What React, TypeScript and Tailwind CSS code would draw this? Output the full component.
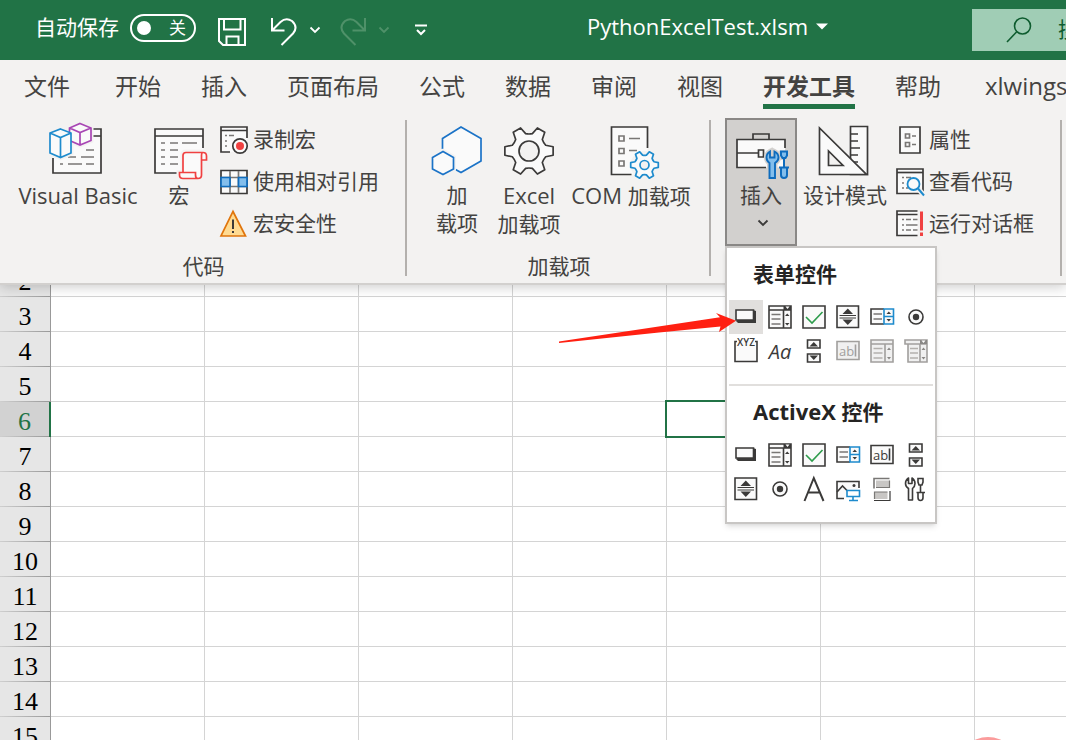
import type { ReactNode } from 'react';

const DARK = '#3b3a39';
const GREY = '#797775';
const PAPER = '#fafafa';
const BLUE = '#1e8bcd';

const tabs = ['开始', '插入', '页面布局', '公式', '数据', '审阅', '视图', '开发工具', '帮助'];
const rows = [3, 4, 5, 6, 7, 8, 9, 10, 11, 12, 13, 14, 15];
const columns = ['B', 'C', 'D', 'E', 'F', 'G', 'H', 'I', 'J', 'K', 'L', 'M'];
const activeRow = 6;
const activeColumn = 'F';

interface IconProps {
  children: ReactNode;
}

const LargeIcon = ({ children }: IconProps) => (
  <svg width="60" height="59" viewBox="0 0 60 59" fill="none" strokeWidth="1.7" className="shrink-0" aria-hidden="true">
    {children}
  </svg>
);

const SmallIcon = ({ children }: IconProps) => (
  <svg width="28" height="28" viewBox="0 0 28 28" fill="none" strokeWidth="1.7" className="shrink-0 overflow-visible" aria-hidden="true">
    {children}
  </svg>
);

const MenuIcon = ({ children }: IconProps) => (
  <svg width="24" height="24" viewBox="0 0 24 24" fill="none" strokeWidth="1.6" className="overflow-visible" aria-hidden="true">
    {children}
  </svg>
);

// Six-toothed cog around (cx, cy); r is the tip radius
const Gear = ({ cx, cy, r, hole, color }: { cx: number; cy: number; r: number; hole: number; color: string }) => {
  const at = (radius: number, deg: number) => {
    const a = (deg * Math.PI) / 180;
    return `${(cx + radius * Math.cos(a)).toFixed(2)} ${(cy + radius * Math.sin(a)).toFixed(2)}`;
  };
  const d = [0, 60, 120, 180, 240, 300]
    .map((t, i) => `${i ? 'L' : 'M'}${at(r * 0.72, t - 19)}L${at(r, t - 10)}L${at(r, t + 10)}L${at(r * 0.72, t + 19)}Q${at(r * 0.68, t + 30)} ${at(r * 0.72, t + 41)}`)
    .join('');
  return (
    <g stroke={color} strokeLinejoin="round">
      <path d={`${d}Z`} fill={PAPER} />
      <circle cx={cx} cy={cy} r={hole} fill="#f3f2f1" />
    </g>
  );
};

const VisualBasicIcon = () => (
  <LargeIcon>
    <path d="M5 7H53V51H5Z" fill={PAPER} />
    <path d="M45 7H53V51H5V36M45 14H53" stroke={DARK} />
    <path d="M38 28H46M20 35H28M33 35H46M12 42H15M20 42H34M38 42H46" stroke={GREY} />
    <path d="M32 1.5L43 6V18.5L32 23L21.5 18.5V6Z" fill={PAPER} stroke="#f3f2f1" strokeWidth="5" />
    <path d="M12.5 7L23 11V31L12.5 35.5L2 31V11Z" fill={PAPER} stroke="#f3f2f1" strokeWidth="5" />
    <path d="M32 1.5L43 6V18.5L32 23L21.5 18.5V6ZM21.5 6L32 10.5L43 6M32 10.5V23" fill={PAPER} stroke="#a846b4" />
    <path d="M12.5 7L23 11V31L12.5 35.5L2 31V11ZM2 11L12.5 15.5L23 11M12.5 15.5V35.5" fill={PAPER} stroke={BLUE} />
  </LargeIcon>
);

const MacroIcon = () => (
  <LargeIcon>
    <path d="M6 7H54V51H6Z" fill={PAPER} />
    <path d="M54 26V7H6V51H28M6 14H54" stroke={DARK} />
    <path d="M12 21H16M21 21H29M33 21H48M12 28H16M21 28H29M12 35H16M21 35H29M12 42H16M21 42H29" stroke={GREY} />
    <path d="M34 50.5V33Q34 30 37 30H58V38H52.5V53Q52.5 56.5 49 56.5H30V50.5Z" fill={PAPER} stroke="#f3f2f1" strokeWidth="5" />
    <path
      d="M34 50.5V33.5Q34 30.5 37 30.5H54Q57.5 30.5 57.5 34V38H52.5V53Q52.5 56.5 49 56.5H34Q30.5 56.5 30.5 53V50.5H46.5V53Q46.5 56.5 49 56.5M52.5 38V33.5Q52.5 30.5 54 30.5"
      fill={PAPER}
      stroke="#f04141"
    />
  </LargeIcon>
);

const AddinIcon = () => (
  <LargeIcon>
    <path d="M34 5L54 16.5V39L34 50.5L15.5 40V16.5Z" fill={PAPER} />
    <path d="M28.5 47.5L34 50.5L54 39V16.5L34 5L15.5 16.5V27" stroke="#1b73c7" />
    <path d="M16 29.5L26.5 35.5V47L16 52.5L5.5 47V35.5Z" fill={PAPER} stroke="#f3f2f1" strokeWidth="5" />
    <path d="M16 29.5L26.5 35.5V47L16 52.5L5.5 47V35.5Z" fill={PAPER} stroke="#1b73c7" />
  </LargeIcon>
);

const ExcelAddinIcon = () => (
  <LargeIcon>
    <Gear cx={30} cy={29} r={24.5} hole={10} color={DARK} />
  </LargeIcon>
);

const ComAddinIcon = () => (
  <LargeIcon>
    <path d="M10.5 5H46.5V52.5H10.5Z" fill={PAPER} />
    <path d="M46.5 26V5H10.5V52.5H30.5" stroke={DARK} />
    <path d="M18 14H23V19H18ZM18 26.5H23V31.5H18ZM18 39H23V44H18ZM28 16.5H39M28 28.5H36" stroke={GREY} />
    <circle cx="43.5" cy="43" r="14" fill="#f3f2f1" />
    <Gear cx={43.5} cy={43} r={14} hole={4.5} color={BLUE} />
  </LargeIcon>
);

const ToolboxIcon = () => (
  <LargeIcon>
    <path d="M6 17.5H54V45.5H6Z" fill={PAPER} />
    <path d="M54 26V17.5H6V45.5H35M22 17.5V12H38V17.5M6 31H27.5" stroke={DARK} />
    <path d="M27.5 28H32.5V35H27.5Z" fill={PAPER} stroke={DARK} />
    <path d="M38.5 56.5V41Q35.5 39 35.5 35.5Q35.5 31.5 39 29.5V35.5H43.5V29.5Q47.5 31.5 47.5 35.5Q47.5 39 44 41V56.5Z" fill="#83beec" stroke="#d2d0ce" strokeWidth="5" />
    <path d="M47.5 28.5H58V38H47.5Z" fill="#d2d0ce" />
    <path d="M38.5 56V41Q35.5 39 35.5 35.5Q35.5 31.5 39 29.5V35.5H43.5V29.5Q47.5 31.5 47.5 35.5Q47.5 39 44 41V56Z" fill="#83beec" stroke="#0f6cbd" strokeWidth="1.9" />
    <path d="M50 29.5H56V33.5L54.5 36H51.5L50 33.5ZM53 36V45M48 45.5H58M50 46V53Q50 56 53 56Q56 56 56 53V46" fill="#83beec" stroke="#0f6cbd" strokeWidth="2" />
  </LargeIcon>
);

const DesignIcon = () => (
  <LargeIcon>
    <path d="M35.5 4.5H52.5V52.5H35.5Z" fill={PAPER} stroke={DARK} />
    <path d="M35.5 12H43M35.5 19H43M35.5 26H45M35.5 33H43M35.5 40H43" stroke={DARK} />
    <path d="M4.5 6V52.5H51.5Z" fill={PAPER} stroke={DARK} />
    <path d="M13.5 29V43.5H28Z" fill="#f3f2f1" stroke={DARK} />
  </LargeIcon>
);

const RecordIcon = () => (
  <SmallIcon>
    <path d="M1 1H27V26H1Z" fill={PAPER} />
    <path d="M27 12V1H1V26H10M1 4.5H27" stroke={DARK} />
    <path d="M5 9.5H7M9 9.5H14M5 15H7M5 20H7" stroke={GREY} />
    <circle cx="20" cy="20" r="7.2" fill={PAPER} stroke={DARK} />
    <circle cx="20" cy="20" r="4" fill="#f04141" />
  </SmallIcon>
);

const RelativeRefIcon = () => (
  <SmallIcon>
    <path d="M1 2.5H27V25.5H1Z" fill={PAPER} stroke={DARK} />
    <path d="M10 3V25M18.5 3V25M1 9.5H27M1 18.5H27" stroke={GREY} />
    <path d="M1 9.5H10V18.5H1ZM18.5 9.5H27V18.5H18.5Z" fill="#83beec" stroke="#0f6cbd" />
  </SmallIcon>
);

const WarningIcon = () => (
  <SmallIcon>
    <path d="M13 1.5L25.5 26H1Z" fill="#ffdb92" stroke="#e0750c" />
    <path d="M13 9.5V19M13 21V23" stroke={DARK} strokeWidth="2" />
  </SmallIcon>
);

const PropertiesIcon = () => (
  <SmallIcon>
    <path d="M4 1H24V27H4Z" fill={PAPER} stroke={DARK} />
    <path d="M9.5 8H13.5V12H9.5ZM9.5 16.5H13.5V20.5H9.5ZM16 10H20M16 18.5H20" stroke={GREY} />
  </SmallIcon>
);

const ViewCodeIcon = () => (
  <SmallIcon>
    <path d="M1 1H27V25.5H1Z" fill={PAPER} stroke={DARK} />
    <path d="M1 4.5H27" stroke={DARK} />
    <path d="M6 9.5H8M10 9.5H15M6 15H8M6 20H8M10 20H12" stroke={GREY} />
    <path d="M22 20.5L28 27.5" stroke="#f3f2f1" strokeWidth="5" />
    <circle cx="17.5" cy="16" r="6" fill={PAPER} stroke={BLUE} strokeWidth="1.8" />
    <path d="M22 20.5L28 27.5" stroke={BLUE} strokeWidth="2" />
  </SmallIcon>
);

const RunDialogIcon = () => (
  <SmallIcon>
    <path d="M1 1H21.5V25.5H1Z" fill={PAPER} />
    <path d="M21.5 1H1V25.5H21.5M1 4.5H21.5" stroke={DARK} />
    <path d="M6 9.5H8M10 9.5H15M17 9.5H21.5M6 15H8M10 15H21.5M6 20H8M10 20H15M17 20H21.5" stroke={GREY} />
    <path d="M25.5 1.5V20.5M25.5 22.5V26" stroke="#f04141" strokeWidth="3" />
  </SmallIcon>
);

const ButtonControl = () => (
  <MenuIcon>
    <path d="M19 5L22 6V18H4L2 16Z" fill={DARK} />
    <path d="M2 5H19.5V15H2Z" fill={PAPER} stroke={DARK} />
  </MenuIcon>
);

const ComboListControl = () => (
  <MenuIcon>
    <path d="M1 1H23V23H1Z" fill={PAPER} stroke={DARK} />
    <path d="M15.5 1H23V5H15.5Z" fill={DARK} />
    <path d="M1 5H23M15.5 5V23" stroke={DARK} />
    <path d="M17.5 1.5H21.5L19.5 4Z" fill="#fff" />
    <path d="M3.5 9.5H12.5M3.5 14H12.5M3.5 19H12.5" stroke={GREY} />
    <path d="M17 11L19.2 8.5L21.5 11ZM17 18L19.2 20.5L21.5 18Z" fill={DARK} />
  </MenuIcon>
);

const CheckControl = () => (
  <MenuIcon>
    <path d="M1 1H23V23H1Z" fill={PAPER} stroke={DARK} />
    <path d="M4 12L10 18L20.5 7" stroke="#2e9c4c" />
  </MenuIcon>
);

const SpinControl = () => (
  <MenuIcon>
    <path d="M1 1H22.5V22.5H1Z" fill={PAPER} stroke={DARK} />
    <path d="M3.5 10.5H20M3.5 13H20" stroke={DARK} strokeWidth="1" />
    <path d="M6.5 9L11.8 3.5L17 9ZM6.5 14.5L11.8 20L17 14.5Z" fill={DARK} />
  </MenuIcon>
);

const ComboControl = () => (
  <MenuIcon>
    <path d="M14 4H1V19H14" fill={PAPER} stroke={DARK} />
    <path d="M3.5 9H12M3.5 14H12" stroke={GREY} />
    <path d="M14 4H23.5V19H14ZM14 11.5H23.5" fill={PAPER} stroke={BLUE} />
    <path d="M16.5 9L18.8 6.5L21 9ZM16.5 14L18.8 16.5L21 14Z" fill={DARK} />
  </MenuIcon>
);

const RadioControl = () => (
  <MenuIcon>
    <circle cx="12" cy="12" r="7" fill={PAPER} stroke={DARK} />
    <circle cx="12" cy="12" r="3.2" fill={DARK} />
  </MenuIcon>
);

const GroupBoxControl = () => (
  <MenuIcon>
    <path d="M3 2.5H1V22.5H23V2.5H21" fill={PAPER} stroke={DARK} />
    <text x="12" y="7" textAnchor="middle" fontSize="10" fontWeight="600" fill={DARK}>XYZ</text>
  </MenuIcon>
);

const LabelControl = () => (
  <MenuIcon>
    <text x="12" y="20" textAnchor="middle" fontSize="20" fontStyle="italic" fill={DARK}>Aa</text>
  </MenuIcon>
);

const ScrollControl = () => (
  <MenuIcon>
    <path d="M5.5 1H18V9H5.5ZM5.5 15H18V23H5.5Z" fill={PAPER} stroke={DARK} />
    <path d="M7.5 7.5L11.8 3L16 7.5ZM7.5 16.5L11.8 21L16 16.5Z" fill={DARK} />
  </MenuIcon>
);

const TextFieldControl = ({ disabled }: { disabled?: boolean }) => {
  const color = disabled ? '#a19f9d' : DARK;
  return (
    <MenuIcon>
      <path d="M1 2.5H23V20.5H1Z" fill={disabled ? '#f0f0f0' : PAPER} stroke={color} />
      <text x="3" y="17" fontSize="13" fill={color}>ab</text>
      <path d="M19.5 5.5V17.5" stroke={color} />
    </MenuIcon>
  );
};

const DisabledListControl = () => (
  <MenuIcon>
    <path d="M1 1H23V23H1ZM1 5H23M15 5V23" fill="#f0f0f0" stroke="#a19f9d" />
    <path d="M3.5 9.5H12.5M3.5 14H12.5M3.5 19H12.5" stroke="#b3b0ad" />
    <path d="M17 11L19 8.5L21 11ZM17 18L19 20.5L21 18Z" fill="#8a8886" />
  </MenuIcon>
);

const DisabledComboControl = () => (
  <MenuIcon>
    <path d="M4 5H23V23H4ZM16 5V23M1 1H23V5H1Z" fill="#f0f0f0" stroke="#a19f9d" />
    <path d="M16 1H23V5H16Z" fill="#8a8886" />
    <path d="M17.5 1.5H21.5L19.5 4Z" fill="#fff" />
    <path d="M6 9.5H14M6 14H14M6 19H14" stroke="#b3b0ad" />
    <path d="M17.5 11L19.5 8.5L21.5 11ZM17.5 18L19.5 20.5L21.5 18Z" fill="#8a8886" />
  </MenuIcon>
);

const CaptionControl = () => (
  <MenuIcon>
    <path d="M2.5 24L11.8 1L21.5 24M6 15.5H18" stroke={DARK} strokeWidth="2" />
  </MenuIcon>
);

const ImageControl = () => (
  <MenuIcon>
    <path d="M8 21.5H1V4.5H23V11" fill={PAPER} stroke={DARK} />
    <path d="M1 15L6.5 9L12 14.5" stroke={DARK} />
    <circle cx="18" cy="8.5" r="1.5" fill={DARK} />
    <path d="M11 13.5H23.5V19.5H11ZM17 19.5V23M13 23.5H22" fill="#fff" stroke={BLUE} />
  </MenuIcon>
);

const ToggleControl = () => (
  <MenuIcon>
    <path d="M6 3.5H19.5V10.5H6ZM4.5 15H17.5V22H4.5Z" fill="#c8c6c4" />
    <path d="M4 11.5V1.5H19.5" stroke={GREY} />
    <path d="M6 10.5H19.5V3.5M4.5 22V15H17.5" stroke={GREY} strokeWidth="1.2" />
    <path d="M20 14V23.5H4" stroke={DARK} strokeWidth="1.2" />
  </MenuIcon>
);

const MoreToolsControl = () => (
  <MenuIcon>
    <path d="M4.5 23V11.5Q1.5 9.5 1.5 6.5Q1.5 3 4.5 1V6.5H8V1Q11 3 11 6.5Q11 9.5 8.5 11.5V23Z" fill={PAPER} stroke={DARK} strokeLinejoin="round" />
    <path d="M14 1.5H19V5L18 8H15L14 5ZM16.5 8V15M12.5 15.5H21M14 16V20.5Q14 23.5 16.5 23.5Q19 23.5 19 20.5V16" fill={PAPER} stroke={DARK} />
  </MenuIcon>
);

const Chevron = ({ color }: { color: string }) => (
  <svg width="12" height="8" viewBox="0 0 12 8" fill="none" stroke={color} strokeWidth="1.8" aria-hidden="true">
    <path d="M1.5 1.5L6 6L10.5 1.5" />
  </svg>
);

const LargeButton = ({ icon, width, children }: { icon: ReactNode; width: string; children: ReactNode }) => (
  <button type="button" className={`flex shrink-0 flex-col items-center whitespace-nowrap pt-1 leading-7 ${width}`}>
    {icon}
    {children}
  </button>
);

const SmallButton = ({ icon, label }: { icon: ReactNode; label: string }) => (
  <button type="button" className="flex h-[42px] items-center gap-[5px] whitespace-nowrap">
    {icon}
    {label}
  </button>
);

const RibbonGroup = ({ caption, width, pad, children }: { caption?: string; width: string; pad: string; children: ReactNode }) => (
  <section className={`relative flex shrink-0 flex-col ${width}`}>
    <div className={`flex h-[133px] items-start ${pad}`}>{children}</div>
    {caption && <div className="text-center leading-[30px]">{caption}</div>}
    <div className="absolute right-0 top-0.5 h-[156px] w-0.5 bg-[#b3b0ad]" />
  </section>
);

const formControls = [
  { name: '按钮', icon: <ButtonControl />, hot: true },
  { name: '组合框', icon: <ComboListControl /> },
  { name: '复选框', icon: <CheckControl /> },
  { name: '数值调节钮', icon: <SpinControl /> },
  { name: '列表框', icon: <ComboControl /> },
  { name: '选项按钮', icon: <RadioControl /> },
  { name: '分组框', icon: <GroupBoxControl /> },
  { name: '标签', icon: <LabelControl /> },
  { name: '滚动条', icon: <ScrollControl /> },
  { name: '文本域', icon: <TextFieldControl disabled />, disabled: true },
  { name: '组合列表', icon: <DisabledListControl />, disabled: true },
  { name: '组合下拉', icon: <DisabledComboControl />, disabled: true },
];

const activeXControls = [
  { name: '命令按钮', icon: <ButtonControl /> },
  { name: '组合框', icon: <ComboListControl /> },
  { name: '复选框', icon: <CheckControl /> },
  { name: '列表框', icon: <ComboControl /> },
  { name: '文本框', icon: <TextFieldControl /> },
  { name: '滚动条', icon: <ScrollControl /> },
  { name: '数值调节钮', icon: <SpinControl /> },
  { name: '选项按钮', icon: <RadioControl /> },
  { name: '标签', icon: <CaptionControl /> },
  { name: '图像', icon: <ImageControl /> },
  { name: '切换按钮', icon: <ToggleControl /> },
  { name: '其他控件', icon: <MoreToolsControl /> },
];

interface Control {
  name: string;
  icon: ReactNode;
  hot?: boolean;
  disabled?: boolean;
}

const ControlGrid = ({ items }: { items: Control[] }) => (
  <div className="grid grid-cols-6">
    {items.map((item) => (
      <button
        key={item.name}
        type="button"
        aria-label={item.name}
        disabled={item.disabled}
        className={`flex h-[34px] items-center justify-center ${item.hot ? 'bg-[#e1dfdd]' : ''}`}
      >
        {item.icon}
      </button>
    ))}
  </div>
);

const InsertMenu = () => (
  <div className="absolute left-0 top-full w-[212px] border-2 border-[#c8c6c4] bg-white px-0.5 pb-4 pt-0.5 text-[#252423] shadow-md">
    <h2 className="h-[50px] pl-6 font-bold leading-[48px]">表单控件</h2>
    <ControlGrid items={formControls} />
    <div className="mt-4 h-0.5 bg-[#e1dfdd]" />
    <h2 className="h-[52px] pl-6 font-bold leading-[50px]">
      <span className="text-[22px]">ActiveX</span> 控件
    </h2>
    <ControlGrid items={activeXControls} />
  </div>
);

const Pointer = () => (
  <svg width="178" height="32" viewBox="0 0 178 32" className="pointer-events-none absolute -left-[166px] top-[194px]" aria-hidden="true">
    <path d="M0 29.5L161 5.3L157 1L177 8.7L160 20L161.5 14.5L100 20.5L0 31Z" fill="#ff2012" />
  </svg>
);

const TitleBar = () => (
  <header className="flex h-[60px] shrink-0 items-center bg-[#217346] text-white">
    <div className="flex w-[587px] shrink-0 items-center pl-[35px]">
      <label className="flex items-center gap-[11px] pb-1">
        自动保存
        <input type="checkbox" className="sr-only" />
        <span className="flex h-7 w-[66px] items-center justify-between rounded-full border-2 border-white pl-[5px] pr-2 text-[17px]">
          <span className="size-3.5 rounded-full bg-white" />关
        </span>
      </label>
      <button type="button" aria-label="保存" className="ml-[22px] mt-1">
        <svg width="28" height="28" viewBox="0 0 28 28" fill="none" stroke="#fff" strokeWidth="2" aria-hidden="true">
          <path d="M1 1H27V27H5L1 23ZM6 1V11.5H22.5V1M8.5 27V18.5H20.5V27" />
        </svg>
      </button>
      <button type="button" aria-label="撤消" className="ml-6 mt-1">
        <svg width="28" height="28" viewBox="0 0 28 28" fill="none" stroke="#fff" strokeWidth="2" aria-hidden="true">
          <path d="M2 0V12.5H14.5M2.5 12L10.5 4Q16 -1 22 3Q28.5 9 23 15.5L11.5 27" />
        </svg>
      </button>
      <button type="button" aria-label="撤消历史" className="ml-[11px]"><Chevron color="#fff" /></button>
      <button type="button" aria-label="重做" disabled className="ml-[19px] mt-1">
        <svg width="28" height="28" viewBox="0 0 28 28" fill="none" stroke="#4f9169" strokeWidth="2" aria-hidden="true">
          <path d="M25 0V12.5H12.5M24.5 12L16.5 4Q11 -1 5 3Q-1.5 9 4 15.5L15.5 27" />
        </svg>
      </button>
      <button type="button" aria-label="重做历史" disabled className="ml-[10px]"><Chevron color="#4f9169" /></button>
      <button type="button" aria-label="自定义快速访问工具栏" className="ml-[25px]">
        <svg width="12" height="12" viewBox="0 0 12 12" fill="none" stroke="#fff" strokeWidth="2" aria-hidden="true">
          <path d="M0 1.5H12M2 6L6 10L10 6" />
        </svg>
      </button>
    </div>
    <div className="w-[385px] shrink-0 pb-2">
      <button type="button" className="flex items-center gap-2 text-[22px]">
        PythonExcelTest.xlsm
        <svg width="12" height="7" viewBox="0 0 12 7" fill="#fff" aria-hidden="true">
          <path d="M0 .5H12L6 6.5Z" />
        </svg>
      </button>
    </div>
    <div className="flex h-[42px] min-w-0 flex-1 items-center gap-[26px] overflow-hidden bg-[#a0cdb5] pl-[34px]">
      <svg width="26" height="26" viewBox="0 0 26 26" fill="none" stroke="#0e5c2f" strokeWidth="1.6" className="shrink-0" aria-hidden="true">
        <circle cx="16.5" cy="9" r="8" />
        <path d="M10.5 15L1 25" />
      </svg>
      <input aria-label="搜索" placeholder="搜索" className="w-60 shrink-0 bg-transparent outline-none placeholder:text-[#0e5c2f]" />
    </div>
  </header>
);

const TabBar = () => (
  <nav className="relative z-20 flex h-[58px] shrink-0 items-start overflow-hidden whitespace-nowrap bg-[#f3f2f1] pl-6 text-[23px]">
    <button type="button" className="mr-[45px] h-[49px] border-b-[5px] border-transparent pt-2">文件</button>
    <div className="flex gap-10">
      {tabs.map((tab) => (
        <button
          key={tab}
          type="button"
          className={`h-[49px] border-b-[5px] pt-2 ${tab === '开发工具' ? 'border-[#217346] font-bold' : 'border-transparent'}`}
        >
          {tab}
        </button>
      ))}
    </div>
    <button type="button" className="ml-11 h-[49px] border-b-[5px] border-transparent pt-2 text-[24px]">xlwings</button>
  </nav>
);

const Ribbon = () => (
  <div className="relative z-10 flex h-[167px] shrink-0 border-b-2 border-[#d2d0ce] bg-[#f3f2f1] shadow-[0_2px_12px_rgba(0,0,0,0.2)]">
    <RibbonGroup caption="代码" width="w-[407px]" pad="gap-[14px] pl-[18px]">
      <LargeButton icon={<VisualBasicIcon />} width="w-[120px]">
        <span className="text-[22px]">Visual Basic</span>
      </LargeButton>
      <LargeButton icon={<MacroIcon />} width="w-[54px]">宏</LargeButton>
      <div className="pt-px">
        <SmallButton icon={<RecordIcon />} label="录制宏" />
        <SmallButton icon={<RelativeRefIcon />} label="使用相对引用" />
        <SmallButton icon={<WarningIcon />} label="宏安全性" />
      </div>
    </RibbonGroup>
    <RibbonGroup caption="加载项" width="w-[304px]" pad="gap-[9px] pl-[19px]">
      <LargeButton icon={<AddinIcon />} width="w-[62px]">
        <span>加<br />载项</span>
      </LargeButton>
      <LargeButton icon={<ExcelAddinIcon />} width="w-16">
        <span><span className="text-[22px]">Excel</span><br />加载项</span>
      </LargeButton>
      <LargeButton icon={<ComAddinIcon />} width="w-[122px]">
        <span><span className="text-[22px]">COM </span>加载项</span>
      </LargeButton>
    </RibbonGroup>
    <RibbonGroup width="w-[351px]" pad="gap-[6px] pl-[14px]">
      <div className="relative">
        <button type="button" aria-expanded="true" className="flex h-32 w-[72px] flex-col items-center border-2 border-[#8a8886] bg-[#d2d0ce] pt-0.5 leading-7">
          <ToolboxIcon />
          插入
          <span className="pl-1 pt-2.5"><Chevron color={DARK} /></span>
        </button>
        <InsertMenu />
        <Pointer />
      </div>
      <LargeButton icon={<DesignIcon />} width="w-[84px]">设计模式</LargeButton>
      <div className="pl-[3px] pt-px">
        <SmallButton icon={<PropertiesIcon />} label="属性" />
        <SmallButton icon={<ViewCodeIcon />} label="查看代码" />
        <SmallButton icon={<RunDialogIcon />} label="运行对话框" />
      </div>
    </RibbonGroup>
  </div>
);

const RowLine = () => <div className="h-px bg-gradient-to-r from-[#cfcfcf] to-[#999999]" />;

const Sheet = () => (
  <main className="relative min-h-0 flex-1 overflow-hidden bg-white">
    <table className="w-[1899px] table-fixed border-separate border-spacing-0">
      <colgroup>
        <col className="w-[51px]" />
        {columns.map((c) => (
          <col key={c} className="w-[154px]" />
        ))}
      </colgroup>
      <tbody className="font-['Liberation_Serif','Noto_Sans_CJK_SC',serif] text-[26px] text-black">
        {/* row 2 is scrolled half out of view */}
        <tr>
          <th className="border-r border-[#999999] bg-[#e6e6e6] p-0 font-normal">
            <div className="flex h-[11px] items-end justify-center overflow-hidden leading-7">2</div>
            <RowLine />
          </th>
          {columns.map((c) => (
            <td key={c} className="border-b border-r border-[#d4d4d4] p-0" />
          ))}
        </tr>
        {rows.map((row) => (
          <tr key={row}>
            <th
              className={`p-0 font-normal ${
                row === activeRow ? 'border-r-2 border-[#217346] bg-[#d2d2d2] text-[#217346]' : 'border-r border-[#999999] bg-[#e6e6e6]'
              }`}
            >
              <div className="h-[34px] pt-1 leading-8">{row}</div>
              <RowLine />
            </th>
            {columns.map((c) => (
              <td key={c} className="relative border-b border-r border-[#d4d4d4] p-0">
                {row === activeRow && c === activeColumn && <div className="absolute inset-0 z-[1] ring-2 ring-[#217346]" />}
              </td>
            ))}
          </tr>
        ))}
      </tbody>
    </table>
    <div className="absolute -bottom-[57px] right-12 size-[60px] rounded-full bg-[#fb9c9c]" />
  </main>
);

export default function App() {
  return (
    <div className="flex h-screen flex-col overflow-hidden font-['Open_Sans','Noto_Sans_CJK_SC',sans-serif] text-[21px] text-[#444341]">
      <TitleBar />
      <TabBar />
      <Ribbon />
      <Sheet />
    </div>
  );
}
